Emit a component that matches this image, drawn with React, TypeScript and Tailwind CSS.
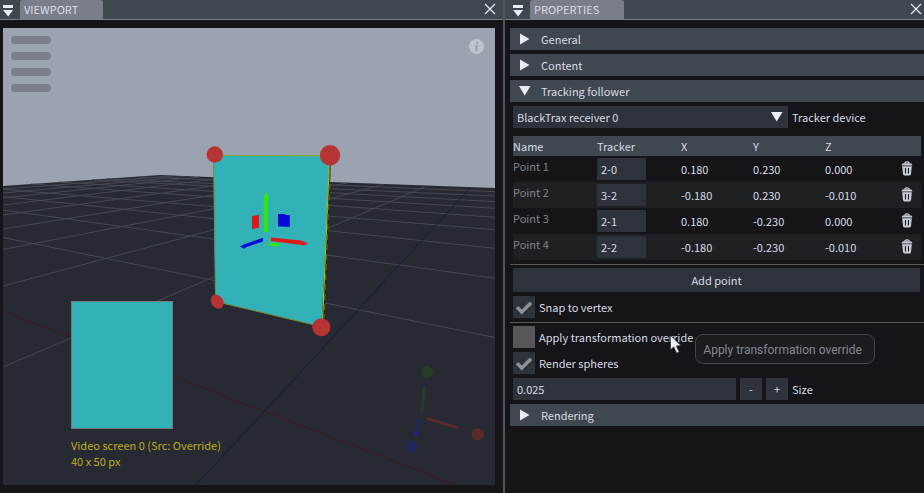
import React, { useState } from 'react'
import clsx from 'clsx'

const points = [
  { name: 'Point 1', tracker: '2-0', x: '0.180', y: '0.230', z: '0.000' },
  { name: 'Point 2', tracker: '3-2', x: '-0.180', y: '0.230', z: '-0.010' },
  { name: 'Point 3', tracker: '2-1', x: '0.180', y: '-0.230', z: '0.000' },
  { name: 'Point 4', tracker: '2-2', x: '-0.180', y: '-0.230', z: '-0.010' },
]

// Floor grid segments: x1, y1, x2, y2
const gridLines = [
  [3, 237.5, 495, 337.5],
  [3, 210, 495, 278.3],
  [3, 196.6, 495, 248.3],
  [3, 189.3, 495, 229.7],
  [31, 184, 495, 217.3],
  [59, 182, 495, 208.3],
  [92, 179.7, 495, 201.7],
  [107, 178.8, 495, 196],
  [140, 177, 495, 191.7],
  [3, 367, 425, 186.7],
  [3, 286, 383, 184.5],
  [3, 249.5, 347, 183],
  [3, 229, 300, 181],
  [3, 215, 260, 179.5],
  [3, 205, 225, 178],
  [3, 198, 200, 177],
  [3, 193, 185, 176.5],
  [3, 189, 172, 176],
]

function Scene() {
  return (
    <svg
      className="absolute inset-0 h-full w-full"
      viewBox="3 28 492 457"
      preserveAspectRatio="xMidYMid slice"
      aria-hidden="true"
    >
      <rect x="3" y="28" width="492" height="457" fill="#9aa3af" />
      <path d="M3 186 L160 175 L330 182 L495 188 V485 H3 Z" fill="#272a32" />
      <g stroke="#464954" strokeWidth="1">
        {gridLines.map(([x1, y1, x2, y2]) => (
          <line key={`${x1}-${y1}`} x1={x1} y1={y1} x2={x2} y2={y2} />
        ))}
      </g>
      <path d="M3 311 L456 485" stroke="#3d1a20" strokeWidth="1" />
      <path d="M470 188 L312 360 L196 485" stroke="#171a3d" strokeWidth="1" fill="none" />

      {/* Tracked screen */}
      <path d="M329 156 L331 156 L324 326 L321 326 Z" fill="#14170f" />
      <path d="M213.5 155.5 L329.5 156.5 L321.5 326.5 L215.5 301.5 Z" fill="#32b2b6" />
      <path d="M321 326.5 L215.5 301.5 L213.5 155.5" fill="none" stroke="#7c8a3a" strokeWidth="1" />
      <path d="M220 155.5 H322" stroke="#8aa62a" strokeWidth="1" />
      <path d="M329.5 160 L322.5 322" stroke="#9ccc0c" strokeWidth="1.2" />
      <path d="M330.3 164 L324 318" stroke="#6b5c1c" strokeWidth="1.4" strokeDasharray="6 4" />
      <g fill="#b73434">
        <circle cx="214.8" cy="154.5" r="8.2" />
        <circle cx="330" cy="155.2" r="10.2" />
        <ellipse cx="217.2" cy="301.6" rx="6" ry="7.4" transform="rotate(-35 217.2 301.6)" />
        <circle cx="321.3" cy="327.2" r="9" />
      </g>

      {/* Move gizmo */}
      <path d="M263.7 232 V199 H262.9 L266.3 191.6 L269.4 199 H268 V232 Z" fill="#32e612" />
      <path d="M252 216 L259 214.7 V227.7 L252 229 Z" fill="#e01818" />
      <path d="M278 214 H285.6 V215 H289.8 V227 L278 226.2 Z" fill="#0a0ad8" />
      <path d="M271 237.4 L301 240.4 L308.3 243.4 L304 245.4 L300 244.8 L271 241 Z" fill="#e01818" />
      <path d="M262.9 237.8 V241.4 L246 247.3 L244.5 248.8 L240 246.8 L243.5 244.6 Z" fill="#0a0ad8" />
      <path d="M265.7 244.4 L273 242.4 L281.7 244.3 L276 246.8 Z" fill="#32e612" />

      {/* Orientation widget */}
      <circle cx="427" cy="372" r="6" fill="#283c2a" />
      <circle cx="477.7" cy="434.3" r="6" fill="#5c2b2b" />
      <circle cx="411.7" cy="446.7" r="6" fill="#22255a" />
      <path d="M424.8 387 L421.7 412.7" stroke="#283c2a" strokeWidth="3" />
      <path d="M427.3 417.3 L456 425.5 L460 428.9 L454 428 L427.3 420 Z" fill="#5c2b2b" />
      <path d="M420.4 419 L416.3 432" stroke="#22255a" strokeWidth="3" />
      <circle cx="416" cy="433.7" r="2.2" fill="#20248a" />
    </svg>
  )
}

function PanelHeader({ title, side }: { title: string; side: 'left' | 'right' }) {
  return (
    <header
      className={clsx(
        'flex h-5 items-stretch border-b border-[#78808b] bg-[#3f474f]',
        side === 'left' ? 'pr-[5px]' : 'pl-[5px]',
      )}
    >
      <button aria-label={`${title} menu`} className="w-5 shrink-0 pl-[3px]">
        <svg width="12" height="14" viewBox="0 0 12 14" fill="#e9eef5">
          <path d="M0 2 H10 V5 H0 Z M0 7 H10 L5.2 13.5 Z" />
        </svg>
      </button>
      <h2
        className={clsx(
          'rounded-t-[3px] bg-[#7a7e8b] px-1 leading-[18px]',
          side === 'left' ? 'w-[83px]' : 'w-[94px]',
        )}
      >
        {title}
      </h2>
      <button aria-label={`Close ${title}`} className="ml-auto w-[14px] shrink-0">
        <svg width="12" height="15" viewBox="0 0 12 15" stroke="#e9eef5" strokeWidth="1.2">
          <path d="M1 2 L11 12 M11 2 L1 12" />
        </svg>
      </button>
    </header>
  )
}

function SectionHeader({ title, open }: { title: string; open?: boolean }) {
  return (
    <button
      aria-expanded={!!open}
      className="flex h-[22px] w-full items-center bg-[#3f474f] pl-[9px] text-left"
    >
      <svg width="12" height="12" viewBox="0 0 12 12" fill="#e9eef5">
        <path d={open ? 'M0 1 H11.5 L5.7 10.5 Z' : 'M1 0.5 L10.5 6 L1 11.5 Z'} />
      </svg>
      <span className="ml-[10px] leading-6">{title}</span>
    </button>
  )
}

interface CheckRowProps {
  id: string
  label: string
  defaultChecked?: boolean
  children?: React.ReactNode
}

function CheckRow({ id, label, defaultChecked, children }: CheckRowProps) {
  const [checked, setChecked] = useState(!!defaultChecked)

  return (
    <div className="flex h-[22px] items-center">
      <span className="relative size-[22px]">
        <input
          id={id}
          type="checkbox"
          checked={checked}
          onChange={(e) => setChecked(e.target.checked)}
          className={clsx('block size-[22px] appearance-none', checked ? 'bg-[#2d323b]' : 'bg-[#57575a]')}
        />
        {checked && (
          <svg
            className="pointer-events-none absolute inset-0"
            width="22"
            height="22"
            viewBox="0 0 22 22"
            fill="none"
            stroke="#8d9097"
            strokeWidth="3.4"
          >
            <path d="M4 11.2 L8.8 16 L18 6.8" />
          </svg>
        )}
      </span>
      <div className="relative ml-1 leading-6">
        <label htmlFor={id}>{label}</label>
        {children}
      </div>
    </div>
  )
}

function TrashIcon() {
  return (
    <svg width="12" height="15" viewBox="0 0 12 15">
      <path d="M3.5 2.2 Q6 -0.4 8.5 2.2" fill="none" stroke="#c9cdd6" strokeWidth="1.2" />
      <path d="M0.5 4.5 Q0.8 2.2 3 2.2 H9 Q11.2 2.2 11.5 4.5 Z" fill="#c9cdd6" />
      <path d="M1.2 5.3 H10.8 L10 13 Q9.8 14.4 8.6 14.4 H3.4 Q2.2 14.4 2 13 Z" fill="#c9cdd6" />
      <path d="M4.5 7 V12.4 M7.5 7 V12.4" stroke="#1b1c21" strokeWidth="1.1" />
    </svg>
  )
}

function PointsTable() {
  return (
    <table className="w-full table-fixed border-collapse text-left">
      <thead>
        <tr className="h-5 bg-[#3f474f] leading-5">
          <th className="w-[84px] p-0 font-normal">Name</th>
          <th className="w-[84px] p-0 font-normal">Tracker</th>
          <th className="w-[72px] p-0 font-normal">X</th>
          <th className="w-[72px] p-0 font-normal">Y</th>
          <th className="p-0 font-normal">Z</th>
          <th className="w-5 p-0" aria-label="Delete" />
        </tr>
      </thead>
      <tbody>
        {points.map((p) => (
          <tr key={p.name} className="h-[26px] even:bg-[#1e2024]">
            <td className="p-0 align-top leading-5 text-[#818388]">{p.name}</td>
            <td className="p-0">
              <input
                aria-label={`${p.name} tracker`}
                defaultValue={p.tracker}
                className="block h-[22px] w-[49px] bg-[#2d323b] px-1"
              />
            </td>
            <td className="p-0">{p.x}</td>
            <td className="p-0">{p.y}</td>
            <td className="p-0">{p.z}</td>
            <td className="p-0 align-top">
              <button aria-label={`Delete ${p.name}`} className="block pt-[5px]">
                <TrashIcon />
              </button>
            </td>
          </tr>
        ))}
      </tbody>
    </table>
  )
}

function Viewport() {
  return (
    <section className="flex flex-col border-r-2 border-[#555558]">
      <PanelHeader title="VIEWPORT" side="left" />
      <div className="relative mt-2 mr-2 mb-2 ml-[3px] flex flex-1 flex-col justify-between overflow-hidden">
        <Scene />
        <div className="relative flex items-start justify-between p-2">
          <button aria-label="Tools" className="flex flex-col gap-2">
            <span className="h-2 w-10 rounded-full bg-[#7a7e8b]" />
            <span className="h-2 w-10 rounded-full bg-[#7a7e8b]" />
            <span className="h-2 w-10 rounded-full bg-[#7a7e8b]" />
            <span className="h-2 w-10 rounded-full bg-[#7a7e8b]" />
          </button>
          <button
            aria-label="Info"
            className="mt-[3px] mr-[3px] size-[15px] rounded-full bg-[#bfc4cf] font-['Liberation_Serif',serif] text-[13px] leading-[15px] font-bold text-[#969ba8] italic"
          >
            i
          </button>
        </div>
        <figure className="relative mb-4 ml-[68px]">
          <div className="h-32 w-[102px] border border-[#77797e] bg-[#32b2b6]" />
          <figcaption className="mt-2 leading-4 text-[#bfae16]">
            <p>Video screen 0 (Src: Override)</p>
            <p>40 x 50 px</p>
          </figcaption>
        </figure>
      </div>
    </section>
  )
}

function Properties() {
  return (
    <section className="flex flex-col">
      <PanelHeader title="PROPERTIES" side="right" />
      <div className="mt-2 flex flex-col gap-1 pl-[5px]">
        <SectionHeader title="General" />
        <SectionHeader title="Content" />
        <SectionHeader title="Tracking follower" open />

        <div className="flex items-center pl-[3px]">
          <div className="relative flex-[0_1_275px]">
            <select id="tracker-device" className="block h-[22px] w-full appearance-none bg-[#2d323b] px-1">
              <option>BlackTrax receiver 0</option>
            </select>
            <svg
              className="pointer-events-none absolute top-[5px] right-[5px]"
              width="12"
              height="12"
              viewBox="0 0 12 12"
              fill="#e9eef5"
            >
              <path d="M0 1 H11.5 L5.7 10.5 Z" />
            </svg>
          </div>
          <label htmlFor="tracker-device" className="ml-1">
            Tracker device
          </label>
        </div>

        <div className="mt-1 pr-[3px] pl-[3px]">
          <PointsTable />
        </div>

        <hr className="border-[#57575a]" />

        <div className="-mt-px pr-1 pl-[3px]">
          <button className="h-6 w-full bg-[#2d323b]">Add point</button>
        </div>
        <div className="pl-[3px]">
          <CheckRow id="snap" label="Snap to vertex" defaultChecked />
        </div>

        <hr className="border-[#57575a]" />

        <div className="-mt-px flex flex-col gap-1 pl-[3px]">
          <CheckRow id="override" label="Apply transformation override">
            <svg className="absolute top-2.5 left-[131px] z-10" width="14" height="20" viewBox="0 0 14 20">
              <path
                d="M0.5 0.5 V14.8 L3.8 11.9 L6.6 18.2 L9.2 17 L6.4 11 L11 10.6 Z"
                fill="#eef2f8"
                stroke="#14141a"
                strokeWidth="0.6"
              />
            </svg>
            <div
              role="tooltip"
              className="absolute top-[9px] left-full ml-0.5 w-[180px] rounded-lg border border-[#44464b] bg-[#1a1c20] px-[7px] pt-1.5 pb-1 font-[Roboto,sans-serif] text-xs leading-[18px] whitespace-nowrap text-[#85878c]"
            >
              Apply transformation override
            </div>
          </CheckRow>
          <CheckRow id="spheres" label="Render spheres" defaultChecked />
          <div className="flex items-center gap-1">
            <input
              id="size"
              defaultValue="0.025"
              className="h-[22px] min-w-0 flex-[0_1_223px] bg-[#2d323b] px-1"
            />
            <button aria-label="Decrease size" className="size-[22px] bg-[#2d323b]">
              -
            </button>
            <button aria-label="Increase size" className="size-[22px] bg-[#2d323b]">
              +
            </button>
            <label htmlFor="size">Size</label>
          </div>
        </div>

        <SectionHeader title="Rendering" />
      </div>
    </section>
  )
}

export default function App() {
  return (
    <main className="grid min-h-screen grid-cols-[505fr_419fr] bg-[#141419] font-['Noto_Sans_CJK_SC',sans-serif] text-[11px] leading-[22px] text-[#d9dce4]">
      <Viewport />
      <Properties />
    </main>
  )
}
